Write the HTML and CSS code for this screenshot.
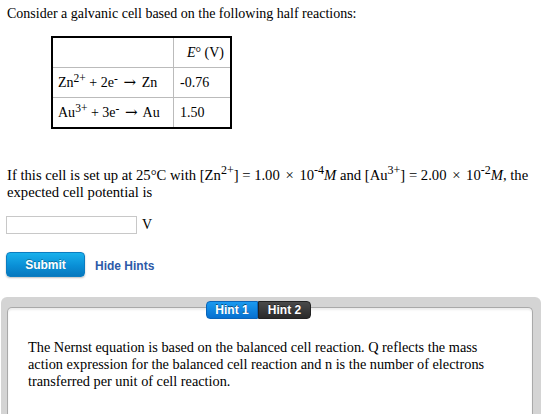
FILE: index.html
```html
<!DOCTYPE html>
<html>
<head>
<meta charset="utf-8">
<link rel="stylesheet" href="styles.css">
</head>
<body>
<div class="page">
  <p class="intro">Consider a galvanic cell based on the following half reactions:</p>
  <table class="half">
    <tr><td></td><td><i>E</i>° (V)</td></tr>
    <tr><td>Zn<sup>2+</sup> + 2e<sup>-</sup> <span class="arr">→</span> Zn</td><td>-0.76</td></tr>
    <tr><td>Au<sup>3+</sup> + 3e<sup>-</sup> <span class="arr">→</span> Au</td><td>1.50</td></tr>
  </table>
  <p class="question">If this cell is set up at 25°C with [Zn<sup>2+</sup>] = 1.00 <span class="times">×</span> 10<sup>-4</sup><i>M</i> and [Au<sup>3+</sup>] = 2.00 <span class="times">×</span> 10<sup>-2</sup><i>M</i>, the expected cell potential is</p>
  <div class="answer"><input class="field" type="text"><span class="unit">V</span></div>
  <div class="actions">
    <button class="submit">Submit</button>
    <a class="hints-link">Hide Hints</a>
  </div>
  <div class="hints">
    <div class="tabs">
      <span class="tab on">Hint 1</span><span class="tab">Hint 2</span>
    </div>
    <div class="hint-panel">
      <p>The Nernst equation is based on the balanced cell reaction. Q reflects the mass action expression for the balanced cell reaction and n is the number of electrons transferred per unit of cell reaction.</p>
    </div>
  </div>
</div>
</body>
</html>
```
FILE: styles.css
```css
html, body { margin: 0; padding: 0; background: #fff; }
body { font-family: "Liberation Serif", "Times New Roman", serif; font-size: 14px; color: #000; }
.page { padding: 0 0 0 7px; }
p { margin: 0; }
sup { font-size: 11.5px; line-height: 0; vertical-align: 5px; }

.intro { padding-top: 5px; line-height: 17px; }

.half {
  margin: 14px 0 0 44px;
  border-collapse: collapse;
  border: 2px solid #000;
}
.half td {
  border: 1px solid #bbb;
  height: 29px;
  padding: 0 4px 0 5px;
  line-height: 16px;
  white-space: nowrap;
}
.half td:first-child { width: 111px; }
.half td:last-child { width: 44px; padding: 0 6px; }
.half tr:first-child td:last-child { text-align: right; }
.arr {
  display: inline-block; width: 15px; text-align: center;
  font: 15px/16px "DejaVu Serif", serif;
  margin: 0 1px;
}

.question { margin-top: 38px; line-height: 17px; width: 530px; font-size: 14.67px; }
.question sup { font-size: 12px; vertical-align: 6px; }
.times { margin: 0 2px; }

.answer { display: flex; align-items: center; margin-top: 15px; margin-left: -1px; }
.field {
  width: 127px; height: 14px; margin: 0; padding: 1px;
  border: 1px solid #c8c8c8; outline: none;
}
.unit { margin-left: 5px; }

.actions { display: flex; align-items: center; margin-top: 18px; margin-left: -1px; }
.submit {
  width: 79px; height: 25px; padding: 0;
  border: 1px solid #0b7cc0; border-radius: 4px;
  background: linear-gradient(#19b1ec, #0a8fd6 55%, #0678be);
  color: #fff; font: bold 12px "Liberation Sans", Arial, sans-serif;
  text-shadow: 0 -1px 0 rgba(0,0,0,0.3);
  box-shadow: 0 1px 2px rgba(0,0,0,0.25);
}
.hints-link {
  margin-left: 10px; margin-top: 3px;
  color: #2d5aa8; font: bold 12px "Liberation Sans", Arial, sans-serif;
}

.hints {
  position: relative;
  margin: 20px 0 0 -6px;
  width: 540px; height: 130px;
  background: #d4d4d4;
  border-radius: 6px 6px 0 0;
  padding: 10px 8px 0 6px;
  box-sizing: border-box;
}
.hint-panel {
  background: #fff;
  height: 100%;
  border: 1px solid #a9a9a9;
  border-bottom: none;
  border-radius: 5px 5px 0 0;
  box-shadow: inset 0 2px 2px rgba(0,0,0,0.08);
  padding: 31px 20px 0 20px;
  box-sizing: border-box;
}
.hint-panel p { line-height: 17px; font-size: 14.3px; width: 480px; }
.tabs {
  position: absolute; left: 205px; top: 4px;
  display: flex;
}
.tab {
  width: 53px; height: 18px; box-sizing: border-box;
  display: flex; align-items: center; justify-content: center;
  color: #fff; font: bold 12px "Liberation Sans", Arial, sans-serif;
  background: linear-gradient(#4a4a4a, #2a2a2a);
  border: 1px solid #222;
  border-radius: 0 4px 4px 0;
  text-shadow: 0 -1px 0 rgba(0,0,0,0.5);
}
.tab.on {
  width: 52px;
  background: linear-gradient(#1a9af0, #0670d0);
  border-color: #0a64b8;
  border-radius: 4px 0 0 4px;
}
```
